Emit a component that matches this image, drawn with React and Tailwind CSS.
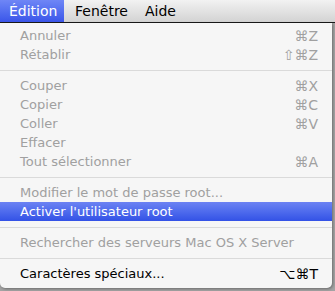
import React from "react";

const items = [
  { t: "Annuler", k: "⌘Z", d: true },
  { t: "Rétablir", k: "⇧⌘Z", d: true },
  { sep: true },
  { t: "Couper", k: "⌘X", d: true },
  { t: "Copier", k: "⌘C", d: true },
  { t: "Coller", k: "⌘V", d: true },
  { t: "Effacer", d: true },
  { t: "Tout sélectionner", k: "⌘A", d: true },
  { sep: true },
  { t: "Modifier le mot de passe root...", d: true },
  { t: "Activer l'utilisateur root", hl: true },
  { sep: true },
  { t: "Rechercher des serveurs Mac OS X Server", d: true },
  { sep: true },
  { t: "Caractères spéciaux...", k: "⌥⌘T" },
];

export default function App() {
  return (
    <div className="w-[335px] h-[291px] overflow-hidden bg-[#a4a4a4] font-['Lucida_Grande','DejaVu_Sans',sans-serif] text-[13px] leading-none">
      <div className="h-[23px] flex items-stretch bg-gradient-to-b from-[#f2f2f2] to-[#d3d3d3] border-b border-[#1a1a1a] text-[14px] text-black">
        <div className="w-[64px] pl-[9px] flex items-center bg-gradient-to-b from-[#6f86f6] to-[#3b55e9] text-white">Édition</div>
        <div className="pl-[11px] flex items-center">Fenêtre</div>
        <div className="pl-[17px] flex items-center">Aide</div>
      </div>
      <div className="w-[332px] bg-[#f6f6f6] rounded-br-[5px] rounded-bl-[5px] pt-[3px] pb-[5px] shadow-[1px_1px_3px_rgba(0,0,0,0.35)]">
        {items.map((it, i) =>
          it.sep ? (
            <div key={i} className="h-[12px] flex items-center">
              <div className="w-full h-px bg-[#dadada]" />
            </div>
          ) : (
            <div
              key={i}
              className={
                "h-[19px] flex items-center justify-between pl-[20px] pr-[14px] " +
                (it.hl
                  ? "bg-gradient-to-b from-[#6c82f3] to-[#3351e6] text-white"
                  : it.d
                  ? "text-[#a0a0a0]"
                  : "text-black")
              }
            >
              <span>{it.t}</span>
              {it.k && <span className="font-['DejaVu_Sans',sans-serif] text-[14px]">{it.k}</span>}
            </div>
          )
        )}
      </div>
    </div>
  );
}
